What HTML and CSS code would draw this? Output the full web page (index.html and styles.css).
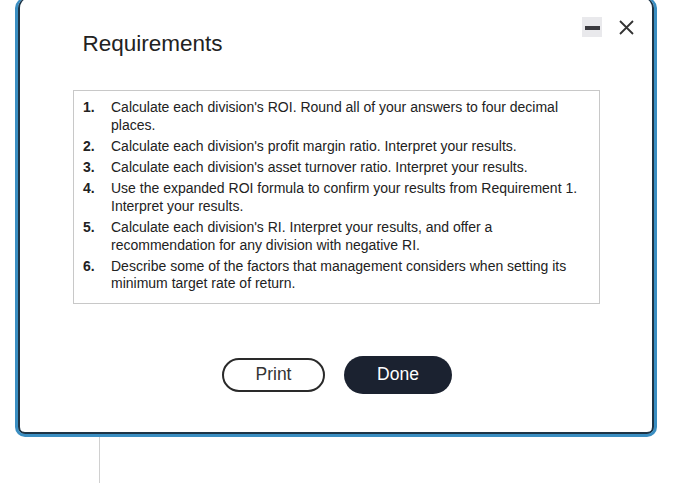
FILE: index.html
```html
<!DOCTYPE html>
<html>
<head>
<meta charset="utf-8">
<link rel="stylesheet" href="styles.css">
</head>
<body>
<div class="dialog">
  <div class="header">
    <h1 class="title">Requirements</h1>
    <div class="controls">
      <span class="minimize"><span class="bar"></span></span>
      <svg class="close" width="15" height="15" viewBox="0 0 15 15"><path d="M1 1 L14 14 M14 1 L1 14" stroke="#333" stroke-width="1.8" fill="none"/></svg>
    </div>
  </div>
  <div class="box">
    <div class="item"><span class="num">1.</span><span class="txt">Calculate each division's ROI. Round all of your answers to four decimal places.</span></div>
    <div class="item"><span class="num">2.</span><span class="txt">Calculate each division's profit margin ratio. Interpret your results.</span></div>
    <div class="item"><span class="num">3.</span><span class="txt">Calculate each division's asset turnover ratio. Interpret your results.</span></div>
    <div class="item"><span class="num">4.</span><span class="txt">Use the expanded ROI formula to confirm your results from Requirement 1. Interpret your results.</span></div>
    <div class="item"><span class="num">5.</span><span class="txt">Calculate each division's RI. Interpret your results, and offer a recommendation for any division with negative RI.</span></div>
    <div class="item"><span class="num">6.</span><span class="txt">Describe some of the factors that management considers when setting its minimum target rate of return.</span></div>
  </div>
  <div class="actions">
    <button class="btn print">Print</button>
    <button class="btn done">Done</button>
  </div>
</div>
<div class="stem"></div>
</body>
</html>
```
FILE: styles.css
```css
html, body {
  margin: 0;
  padding: 0;
  background: #fff;
  font-family: "Liberation Sans", Arial, sans-serif;
  color: #222;
  overflow: hidden;
}
.dialog {
  margin: -2px 0 0 15px;
  width: 642px;
  height: 439px;
  box-sizing: border-box;
  border: 3px solid #3a8ec2;
  border-top: 1px solid #a5a5a5;
  border-radius: 10px;
  box-shadow: inset 2px 0 0 #1d3446, inset -2px 0 0 #1d3446, inset 0 -2px 0 #1d3446;
  background: #fff;
}
.header {
  display: flex;
  justify-content: space-between;
  align-items: flex-start;
}
.title {
  margin: 34px 0 0 64.5px;
  font-size: 22.5px;
  line-height: 22.5px;
  font-weight: normal;
  color: #222;
}
.controls {
  display: flex;
  align-items: center;
  gap: 17px;
  margin: 18px 20px 0 0;
}
.minimize {
  width: 20px;
  height: 20px;
  background: #e9e9ec;
  display: flex;
  align-items: center;
  justify-content: center;
}
.bar {
  width: 15px;
  height: 4px;
  background: #3a3a3f;
  margin-top: 2px;
}
.close {
  display: block;
}
.box {
  margin: 34.5px 0 0 55px;
  width: 527px;
  box-sizing: border-box;
  border: 1px solid #c8c8c8;
  padding: 8px 14px 10px 9px;
  font-size: 14px;
  line-height: 17.5px;
  color: #222;
}
.item {
  display: grid;
  grid-template-columns: 28px 1fr;
  margin-bottom: 3.75px;
}
.item:last-child {
  margin-bottom: 0;
}
.num {
  font-weight: bold;
}
.actions {
  display: flex;
  justify-content: center;
  align-items: center;
  gap: 19px;
  margin-top: 52px;
  padding-left: 2px;
}
.btn {
  font-family: "Liberation Sans", Arial, sans-serif;
  font-size: 17.5px;
  border-radius: 19px;
  box-sizing: border-box;
  padding: 0;
  cursor: pointer;
}
.print {
  width: 103px;
  height: 34px;
  border: 2px solid #2a2a2a;
  background: #fff;
  color: #333;
}
.done {
  width: 108px;
  height: 38px;
  border: none;
  background: #1b2230;
  color: #fff;
}
.stem {
  margin-left: 99px;
  width: 1px;
  height: 46px;
  background: #d0d0d0;
}
```
